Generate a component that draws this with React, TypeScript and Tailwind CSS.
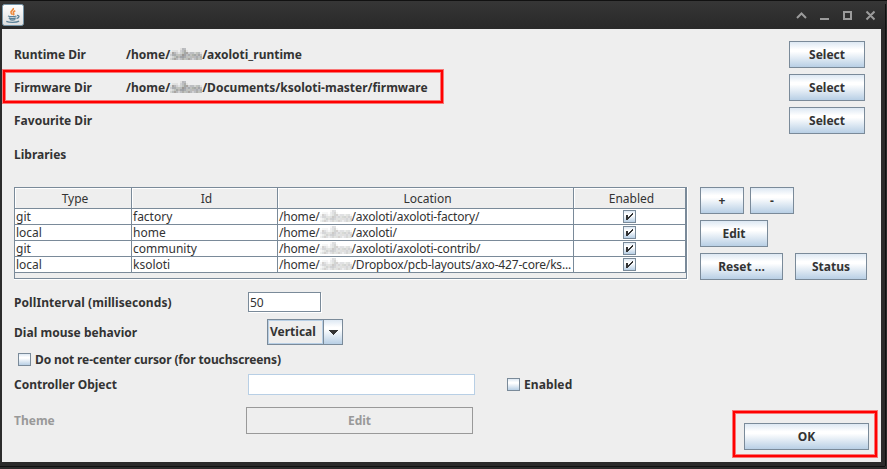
import type { ReactNode } from "react";

const FACE = "border border-[#7a8a99] bg-[linear-gradient(to_bottom,#dde8f3_0%,#ffffff_30%,#ffffff_38%,#b8cfe5_100%)]";

function Button({ children, className }: { children: ReactNode; className: string }) {
  return (
    <button className={`${FACE} flex h-[27px] shrink-0 items-center justify-center font-bold ${className}`}>
      {children}
    </button>
  );
}

const MOSAIC = [
  "0000013300000000",
  "0111023410000000",
  "1432123442332331",
  "2443335434344343",
  "1234345433333434",
  "2343234334323433",
];
const SHADES = ["#4a5058", "#4a5058", "#55564c", "#55604c", "#3d4a48", "#4c4036", "#3a3e48"];
const LEVELS = [0, 0.08, 0.18, 0.3, 0.42, 0.5];

function Redacted({ light }: { light?: boolean }) {
  return (
    <svg
      width="32"
      height="12"
      viewBox="0 0 32 12"
      shapeRendering="crispEdges"
      className={`mb-0.5 shrink-0 ${light ? "opacity-55" : ""}`}
    >
      {MOSAIC.map((row, y) =>
        row.split("").map((v, x) => (
          <rect key={`${x}-${y}`} x={x * 2} y={y * 2} width="2" height="2" fill={SHADES[(x + y * 2) % 7]} opacity={LEVELS[Number(v)]} />
        )),
      )}
    </svg>
  );
}

function Path({ tail, light }: { tail: string; light?: boolean }) {
  return (
    <span className={`flex items-center whitespace-pre ${light ? "tracking-[-0.18px]" : ""}`}>
      <span>/home/</span>
      <Redacted light={light} />
      <span>{tail}</span>
    </span>
  );
}

function DirRow({ label, tail }: { label: string; tail?: string }) {
  return (
    <div className="flex h-[27px] items-center">
      <span className="w-[112px]">{label}</span>
      <span className="flex-1">{tail && <Path tail={tail} />}</span>
      <Button className="w-[76px]">Select</Button>
    </div>
  );
}

function CheckBox({ checked }: { checked?: boolean }) {
  return (
    <span className={`${FACE} flex size-[13px] shrink-0 items-center justify-center`}>
      {checked && (
        <svg width="9" height="9" viewBox="0 0 9 9" shapeRendering="crispEdges" fill="#333">
          <path d="M1 3h2v2h1v-1h1v-1h1v-1h1v-1h1v2h-1v1h-1v1h-1v1h-1v1h-1v1h-2z" />
        </svg>
      )}
    </span>
  );
}

const LIBRARIES = [
  ["git", "factory", "/axoloti/axoloti-factory/"],
  ["local", "home", "/axoloti/"],
  ["git", "community", "/axoloti/axoloti-contrib/"],
  ["local", "ksoloti", "/Dropbox/pcb-layouts/axo-427-core/ks..."],
];
const GRID = "grid grid-cols-[117px_146px_296px_112px]";

function Table() {
  return (
    <div className="h-[93px] w-[674px] border-r border-b border-white font-normal">
      <div className="h-[92px] w-[673px] border border-[#7a8a99]">
        <div className={`${GRID} h-[21px] border-b border-[#7a8a99]`}>
          {["Type", "Id", "Location", "Enabled"].map((h) => (
            <div key={h} className="flex items-center justify-center border-r border-[#7a8a99]">
              <span className="flex h-full w-full items-center justify-center border-t border-l border-white pl-[3px]">{h}</span>
            </div>
          ))}
        </div>
        {LIBRARIES.map(([type, id, tail]) => (
          <div key={id} className={`${GRID} h-4 border-b border-[#7a8a99] bg-white leading-[15px]`}>
            <span className="border-r border-[#7a8a99] pl-px">{type}</span>
            <span className="border-r border-[#7a8a99] pl-px">{id}</span>
            <span className="border-r border-[#7a8a99] pl-px"><Path tail={tail} light /></span>
            <span className="flex items-center justify-center border-r border-[#7a8a99] pr-px"><CheckBox checked /></span>
          </div>
        ))}
      </div>
    </div>
  );
}

function TitleBar() {
  return (
    <header className="flex h-[29px] items-center justify-between border-t border-[#111] bg-linear-to-b from-[#363636] to-[#292929] pr-3 pl-0.5">
      <svg width="22" height="22" viewBox="0 0 22 22" fill="none">
        <defs>
          <linearGradient id="tile" x2="0" y2="1">
            <stop stopColor="#fff" />
            <stop offset="1" stopColor="#dedede" />
          </linearGradient>
        </defs>
        <rect x=".5" y=".5" width="21" height="21" rx="2" fill="url(#tile)" stroke="#7595a8" />
        <path d="M11.300 4c1 2-3.400 3-2.200 5 .3.700 1 1 1.200 1.700M13.300 6.800c-2.200 1-2.300 1.800-1.600 2.800.4.700.2 1-.4 1.700" stroke="#ee8a3c" strokeWidth="1.600" />
        <path d="M6 12c2 .9 6.500.9 8.500 0M6.800 13.900c2 .9 5 .9 7 0M7.600 15.500c1.500.6 4.200.6 5.800 0M4.300 17.300c3 1.400 10 1.400 12.800-.2M15 11.500c2.900-.3 2.600 2.400-.5 3" stroke="#5b8299" strokeWidth="1.300" />
      </svg>
      <svg width="79" height="11" viewBox="0 0 79 11" fill="none" stroke="#9b9b9b" strokeWidth="2">
        <path d="M1 8L5.500 3.500L10 8M24 9h9M48 2h7v7h-7zM70.500 1.500l8 8M78.500 1.500l-8 8" />
      </svg>
    </header>
  );
}

export default function App() {
  return (
    <div className="relative h-[469px] w-[887px] overflow-hidden bg-[#2b2b2b] font-['Noto_Sans','Open_Sans',sans-serif] text-[12px] leading-4 font-bold text-[#333]">
      <TitleBar />
      <main className="ml-0.5 h-[433px] w-[879px] bg-[#eee] pt-3 pl-3">
        <div className="flex w-[851px] flex-col gap-1.5">
          <DirRow label="Runtime Dir" tail="/axoloti_runtime" />
          <DirRow label="Firmware Dir" tail="/Documents/ksoloti-master/firmware" />
          <DirRow label="Favourite Dir" />
        </div>
        <div className="mt-[13px] h-10">Libraries</div>
        <div className="flex gap-3">
          <Table />
          <div className="flex flex-col gap-1.5">
            <div className="flex gap-1.5">
              <Button className="w-11">+</Button>
              <Button className="w-11">-</Button>
            </div>
            <Button className="w-[68px]">Edit</Button>
            <div className="flex gap-3">
              <Button className="w-[83px]">Reset ...</Button>
              <Button className="w-[72px]">Status</Button>
            </div>
          </div>
        </div>
        <div className="mt-3 flex h-5 items-center">
          <span className="w-[234px] pt-0.5 tracking-[0.08px]">PollInterval (milliseconds)</span>
          <span className="flex h-5 w-[73px] items-center border border-[#7a8a99] bg-white pt-px pl-px font-normal shadow-[1px_1px_0_#fff]">50</span>
        </div>
        <div className="mt-[7px] flex h-[26px] items-center">
          <span className="w-[253px] pt-px tracking-[0.03px]">Dial mouse behavior</span>
          <span className="flex h-[26px] w-[76px] border border-[#7a8a99]">
            <span className="w-[55px] border border-[#b8cfe5] pl-px leading-[21px]">Vertical</span>
            <span className="flex flex-1 items-center justify-center border-l border-[#7a8a99] bg-[linear-gradient(to_bottom,#dde8f3_0%,#ffffff_30%,#ffffff_38%,#b8cfe5_100%)]">
              <svg width="10" height="5" viewBox="0 0 10 5" fill="#333" shapeRendering="crispEdges"><path d="M0 0h10L5 5z" /></svg>
            </span>
          </span>
        </div>
        <div className="mt-2 flex h-[13px] items-center gap-1 pl-1">
          <CheckBox />
          <span className="tracking-[-0.13px]">Do not re-center cursor (for touchscreens)</span>
        </div>
        <div className="mt-2 flex h-[21px] items-center">
          <span className="w-[234px]">Controller Object</span>
          <span className="mr-8 h-[21px] w-[227px] border border-[#b8cfe5] bg-white" />
          <CheckBox />
          <span className="ml-1 tracking-[0.1px]">Enabled</span>
        </div>
        <div className="mt-3 flex h-[27px] items-center text-[#999]">
          <span className="w-[232px]">Theme</span>
          <span className="flex h-[27px] w-[227px] items-center justify-center border border-[#999]">Edit</span>
        </div>
        <div className="-mt-[11px] flex w-[855px] justify-end">
          <Button className="w-[125px]">OK</Button>
        </div>
      </main>
      <div className="mt-1 h-px w-[885px] bg-[#111]" />
      <div className="absolute top-[69px] left-[2px] h-[35px] w-[442px] border-4 border-[#ff0000]/50">
        <div className="-m-[3px] h-[33px] w-[440px] border-2 border-[#ff0000]" />
      </div>
      <div className="absolute top-[410px] left-[732px] h-12 w-[146px] border-4 border-[#ff0000]/50">
        <div className="-m-[3px] h-[46px] w-36 border-2 border-[#ff0000]" />
      </div>
      <div className="absolute top-1 right-px h-[462px] w-px bg-[#111]" />
    </div>
  );
}
